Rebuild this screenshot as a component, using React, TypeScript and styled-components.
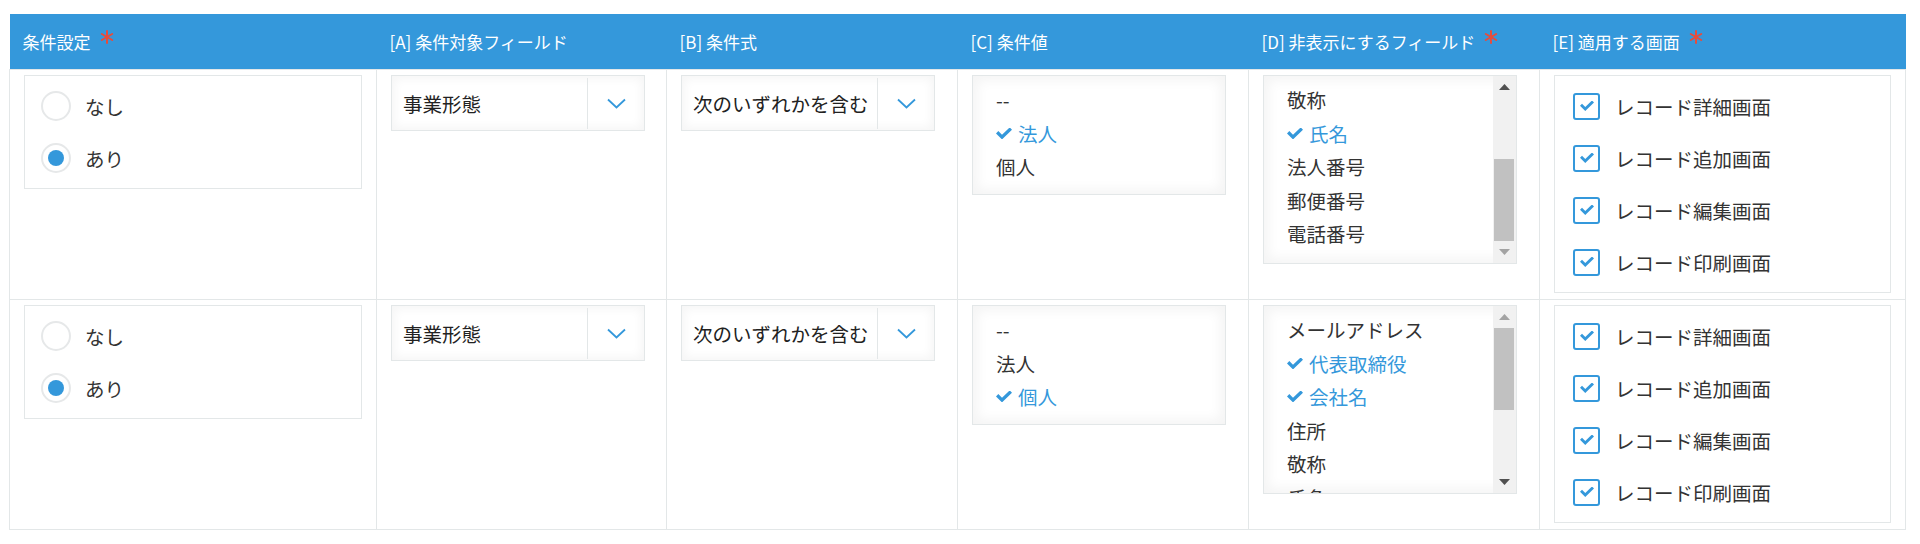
import styled, { createGlobalStyle } from 'styled-components'

const GlobalStyle = createGlobalStyle`
    body {
        margin: 0;
        background: #fff;
        font-family: "Noto Sans CJK JP", "Noto Sans", sans-serif;
        color: #333;
    }
`

interface IOption {
    label: string
    checked?: boolean
}

interface IRule {
    hasCondition: boolean
    field: string
    operator: string
    values: IOption[]
    hidden: IOption[]
    scrolled: 'top' | 'bottom'
}

const columnWidths = [367, 290, 291, 291, 291, 366]

const headers = [
    { label: '条件設定', required: true },
    { label: '[A] 条件対象フィールド' },
    { label: '[B] 条件式' },
    { label: '[C] 条件値' },
    { label: '[D] 非表示にするフィールド', required: true },
    { label: '[E] 適用する画面', required: true },
]

const screens = ['レコード詳細画面', 'レコード追加画面', 'レコード編集画面', 'レコード印刷画面']

const rules: IRule[] = [
    {
        hasCondition: true,
        field: '事業形態',
        operator: '次のいずれかを含む',
        values: [{ label: '--' }, { label: '法人', checked: true }, { label: '個人' }],
        hidden: [
            { label: '敬称' },
            { label: '氏名', checked: true },
            { label: '法人番号' },
            { label: '郵便番号' },
            { label: '電話番号' },
        ],
        scrolled: 'bottom',
    },
    {
        hasCondition: true,
        field: '事業形態',
        operator: '次のいずれかを含む',
        values: [{ label: '--' }, { label: '法人' }, { label: '個人', checked: true }],
        hidden: [
            { label: 'メールアドレス' },
            { label: '代表取締役', checked: true },
            { label: '会社名', checked: true },
            { label: '住所' },
            { label: '敬称' },
            { label: '氏名' },
        ],
        scrolled: 'top',
    },
]

const CheckGlyph = ({ size = 16 }: { size?: number }) => (
    <svg width={size} height={size * 11 / 16} viewBox="0 0 16 11">
        <polygon points="0,5.4 2.3,3.1 6,6.8 13.7,-0.6 16,1.7 6,11.4" fill="#3498db" />
    </svg>
)

const Chevron = () => (
    <svg width="19" height="11" viewBox="0 0 19 11">
        <polyline points="1,1.5 9.5,9.5 18,1.5" fill="none" stroke="#3498db" strokeWidth="1.8" />
    </svg>
)

const Asterisk = () => (
    <svg width="14" height="14" viewBox="0 0 14 14">
        <g stroke="#e74c3c" strokeWidth="2" strokeLinecap="round">
            <line x1="7" y1="1" x2="7" y2="13" />
            <line x1="1.8" y1="4" x2="12.2" y2="10" />
            <line x1="1.8" y1="10" x2="12.2" y2="4" />
        </g>
    </svg>
)

const Triangle = ({ up, active }: { up?: boolean, active?: boolean }) => (
    <svg width="11" height="6" viewBox="0 0 11 6">
        <polygon points={up ? "0,6 5.5,0 11,6" : "0,0 5.5,6 11,0"} fill={active ? "#505050" : "#a3a3a3"} />
    </svg>
)

const MultiList = ({ items, height, scrolled }: { items: IOption[], height: number, scrolled?: 'top' | 'bottom' }) => (
    <ListBox $height={height}>
        <ListInner>
            {items.map((item, index) => <ListItem key={index} $checked={!!item.checked}>
                {item.checked && <CheckGlyph />}
                <span>{item.label}</span>
            </ListItem>)}
        </ListInner>
        {scrolled && <ScrollBar>
            <ScrollButton><Triangle up active={scrolled === 'bottom'} /></ScrollButton>
            <ScrollTrack $at={scrolled}>
                <ScrollThumb />
            </ScrollTrack>
            <ScrollButton><Triangle active={scrolled === 'top'} /></ScrollButton>
        </ScrollBar>}
    </ListBox>
)

const App = () => {
    return (
        <Wrap>
            <GlobalStyle />
            <Table>
                <colgroup>
                    {columnWidths.map((w, i) => <col key={i} width={w} />)}
                </colgroup>
                <thead>
                    <tr>
                        {headers.map((h, i) => <HeadCell key={i}>
                            {h.label}
                            {h.required && <Required><Asterisk /></Required>}
                        </HeadCell>)}
                    </tr>
                </thead>
                <tbody>
                    {rules.map((rule, index) => <tr key={index}>
                        <Cell>
                            <OptionBox>
                                <OptionItem>
                                    <Radio $checked={!rule.hasCondition} />
                                    <span>なし</span>
                                </OptionItem>
                                <OptionItem>
                                    <Radio $checked={rule.hasCondition} />
                                    <span>あり</span>
                                </OptionItem>
                            </OptionBox>
                        </Cell>
                        <Cell>
                            <SelectBox>
                                <SelectValue>{rule.field}</SelectValue>
                                <SelectArrow><Chevron /></SelectArrow>
                            </SelectBox>
                        </Cell>
                        <Cell>
                            <SelectBox>
                                <SelectValue>{rule.operator}</SelectValue>
                                <SelectArrow><Chevron /></SelectArrow>
                            </SelectBox>
                        </Cell>
                        <Cell>
                            <MultiList items={rule.values} height={120} />
                        </Cell>
                        <Cell>
                            <MultiList items={rule.hidden} height={189} scrolled={rule.scrolled} />
                        </Cell>
                        <Cell>
                            <OptionBox>
                                {screens.map((s) => <OptionItem key={s}>
                                    <CheckBox>
                                        <CheckGlyph size={14} />
                                    </CheckBox>
                                    <span>{s}</span>
                                </OptionItem>)}
                            </OptionBox>
                        </Cell>
                    </tr>)}
                </tbody>
            </Table>
        </Wrap>
    );
}

export default App;

const Wrap = styled.div`
    padding: 14px 0 0 9px;
`

const Table = styled.table`
    width: 1896px;
    table-layout: fixed;
    border-collapse: collapse;
`

const HeadCell = styled.th`
    height: 55px;
    padding: 0 13px;
    background: #3498db;
    border: none;
    color: #fff;
    font-size: 17px;
    font-weight: 400;
    text-align: left;
    vertical-align: middle;
    white-space: nowrap;
`

const Required = styled.span`
    display: inline-block;
    margin-left: 9px;
    line-height: 0;
    vertical-align: 5px;
`

const Cell = styled.td`
    padding: 5px 14px 6px;
    border: 1px solid #e3e7e8;
    vertical-align: top;
    font-size: 19.5px;
    color: #333;
`

const OptionBox = styled.div`
    border: 1px solid #e3e7e8;
    padding: 4px 0;
    background: #fff;
`

const OptionItem = styled.div`
    height: 52px;
    display: flex;
    align-items: center;
    gap: 14px;
    padding-left: 16px;
    white-space: nowrap;
`

const Radio = styled.span<{ $checked: boolean }>`
    width: 30px;
    height: 30px;
    box-sizing: border-box;
    border: 2px solid #e6e8e9;
    border-radius: 50%;
    background: #fff;
    display: flex;
    align-items: center;
    justify-content: center;
    flex-shrink: 0;
    &::after {
        content: "";
        display: ${p => p.$checked ? 'block' : 'none'};
        width: 16px;
        height: 16px;
        border-radius: 50%;
        background: #3498db;
    }
`

const CheckBox = styled.span`
    width: 27px;
    height: 27px;
    margin: 0 1px 0 2px;
    box-sizing: border-box;
    border: 2px solid #3498db;
    border-radius: 3px;
    background: #fff;
    display: flex;
    align-items: center;
    justify-content: center;
    flex-shrink: 0;
`

const SelectBox = styled.div`
    width: 254px;
    height: 56px;
    box-sizing: border-box;
    border: 1px solid #e3e7e8;
    background: #fff;
    box-shadow: inset 0 0 10px 3px #f6f6f6;
    display: flex;
`

const SelectValue = styled.div`
    flex: 1;
    display: flex;
    align-items: center;
    padding-left: 11px;
    white-space: nowrap;
    overflow: hidden;
    color: #222;
`

const SelectArrow = styled.div`
    width: 56px;
    margin: 2px 0 1px;
    border-left: 1px solid #e3e7e8;
    display: flex;
    align-items: center;
    justify-content: center;
`

const ListBox = styled.div<{ $height: number }>`
    width: 254px;
    height: ${p => p.$height}px;
    box-sizing: border-box;
    border: 1px solid #e3e7e8;
    background: #fff;
    box-shadow: inset 0 0 12px 5px #f5f5f5;
    display: flex;
    overflow: hidden;
`

const ListInner = styled.div`
    flex: 1;
    padding: 7px 0 0 23px;
    overflow: hidden;
`

const ListItem = styled.div<{ $checked: boolean }>`
    height: 33.5px;
    display: flex;
    align-items: center;
    gap: 6px;
    white-space: nowrap;
    color: ${p => p.$checked ? '#3498db' : '#333'};
`

const ScrollBar = styled.div`
    width: 23px;
    background: #f1f1f1;
    display: flex;
    flex-direction: column;
`

const ScrollButton = styled.div`
    height: 22px;
    display: flex;
    align-items: center;
    justify-content: center;
`

const ScrollTrack = styled.div<{ $at: 'top' | 'bottom' }>`
    flex: 1;
    display: flex;
    flex-direction: column;
    justify-content: ${p => p.$at === 'top' ? 'flex-start' : 'flex-end'};
    padding: 0 2px 0 1px;
`

const ScrollThumb = styled.div`
    height: 82px;
    background: #c1c1c1;
`
